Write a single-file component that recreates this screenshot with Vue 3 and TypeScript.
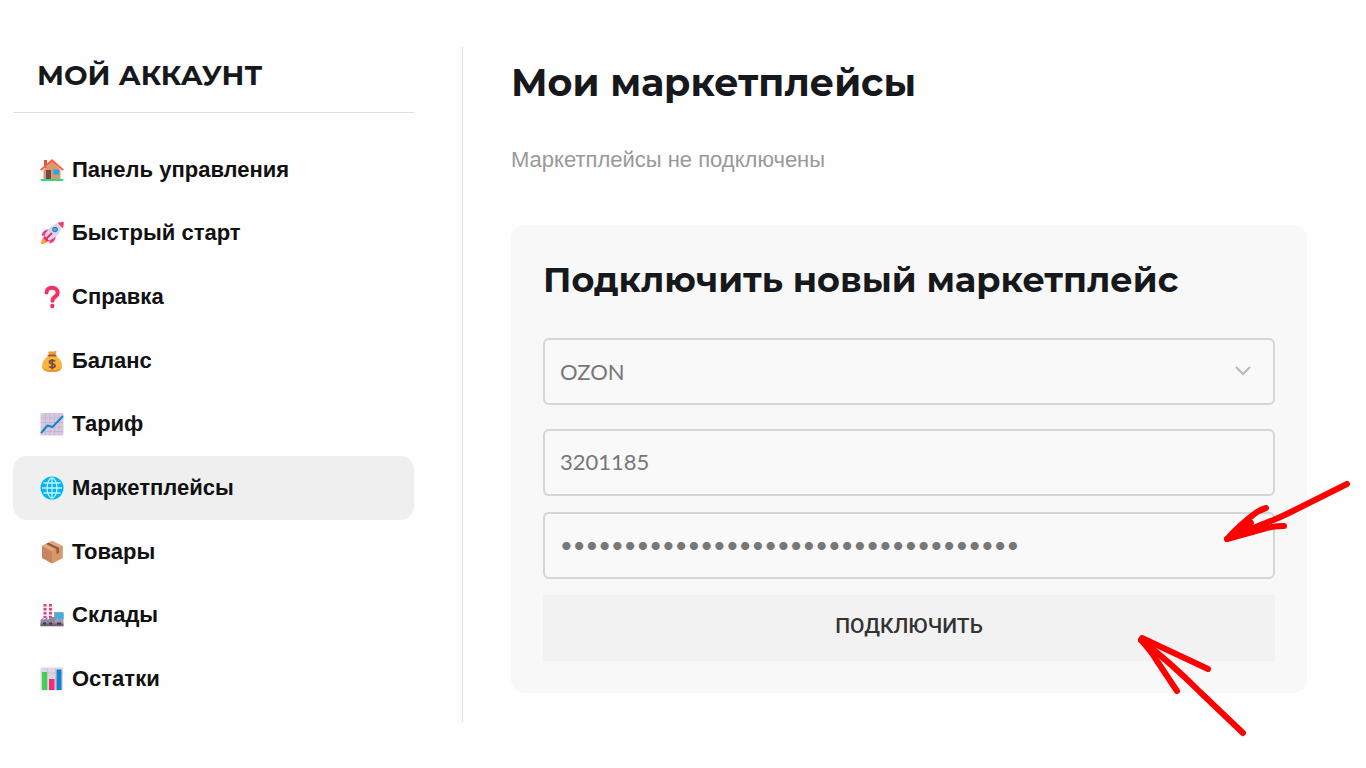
<script setup lang="ts">
import { ref } from 'vue'

interface MenuItem {
  icon: string
  label: string
}

const menu: MenuItem[] = [
  { icon: 'home', label: 'Панель управления' },
  { icon: 'rocket', label: 'Быстрый старт' },
  { icon: 'question', label: 'Справка' },
  { icon: 'money', label: 'Баланс' },
  { icon: 'chart', label: 'Тариф' },
  { icon: 'globe', label: 'Маркетплейсы' },
  { icon: 'box', label: 'Товары' },
  { icon: 'factory', label: 'Склады' },
  { icon: 'bars', label: 'Остатки' },
]

const active = ref('Маркетплейсы')
const marketplace = ref('OZON')
const clientId = ref('3201185')
const apiKey = ref('0'.repeat(36))
</script>

<template>
  <div class="page">
    <aside class="sidebar">
      <h2 class="account">МОЙ АККАУНТ</h2>
      <nav class="nav">
        <a
          v-for="item in menu"
          :key="item.label"
          href="#"
          class="link"
          :class="{ active: item.label === active }"
          @click.prevent="active = item.label"
        >
          <svg class="icon" viewBox="0 0 24 24" aria-hidden="true">
            <g v-if="item.icon === 'home'">
              <rect x="4" y="2" width="3" height="8" fill="#d9573f" />
              <path d="M3.500 12 12 4l8.500 8v9.500h-17z" fill="#d99a70" />
              <path d="M12 1 24 11.500l-1.500 1.200L12 4.500 1.500 12.700 0 11.500z" fill="#fb6549" />
              <rect x="6" y="12" width="5" height="9.500" fill="#73474a" />
              <rect x="13.500" y="11.500" width="5.500" height="5" fill="#1cabe9" />
              <rect x="0.500" y="21" width="23" height="2" rx="1" fill="#28dc83" />
            </g>
            <g v-else-if="item.icon === 'rocket'">
              <path d="M1 23c0-4 1.500-7 4.500-7L8 18.500C8 21.500 5 23 1 23z" fill="#ff9f3f" />
              <path d="M9 8.500c-4-.5-6.500 2-7.500 6l6 .5zM15.500 15c.5 4-2 6.500-6 7.500l-.5-6z" fill="#f4388a" />
              <path d="M4.500 14.500C8 7 14 1.500 22.500 1.500c0 8.500-5.500 14.500-13 18z" fill="#dcd4e6" />
              <path d="M17.500 1.800c2-.7 4-.8 6.200-.8.100 2.200-.1 4.200-.8 6.200z" fill="#f53a68" />
              <circle cx="15" cy="8.500" r="2.800" fill="#3b79b8" />
              <circle cx="15" cy="8.500" r="1.600" fill="#39b8f2" />
              <path d="m4 14.500 5.500 5.500-3 .5L3.500 17z" fill="#e8256b" />
              <path d="m7 17 4.500-4.500" stroke="#e8256b" stroke-width="1.800" stroke-linecap="round" />
            </g>
            <g v-else-if="item.icon === 'question'">
              <path d="M6.500 7.500C6.500 4.200 9 2.800 12 2.800s5.700 1.700 5.700 5c0 4-5.200 3.700-5.200 8" fill="none" stroke="#f92f60" stroke-width="4" stroke-linecap="round" />
              <circle cx="12.300" cy="21" r="2.200" fill="#f92f60" />
            </g>
            <g v-else-if="item.icon === 'money'">
              <path d="M8 2.500c1.500 1 2.500-.8 4 0s2.500-1.200 4.500 0L15 7H9.500z" fill="#f59b2d" />
              <path d="M9.500 6h5.500c5 3.500 7 7 7 11s-3 6-9.700 6S2 21 2 17s2.500-7.500 7.500-11z" fill="#f9b43d" />
              <path d="M3 19c5 3 12 3 18 0-1 3-4 4-8.700 4S4 22 3 19z" fill="#ef9332" />
              <path d="M8.500 6.500h7" stroke="#a05d38" stroke-width="2" stroke-linecap="round" />
              <path d="M15 12.500c-1-1.500-5.500-1.500-5.500.7s5.500 1.200 5.500 3.600-4.700 2.400-5.800.5M12.200 10v10.500" fill="none" stroke="#7a4c45" stroke-width="1.800" />
            </g>
            <g v-else-if="item.icon === 'chart'">
              <rect x="0.500" y="1" width="23" height="22.500" rx="1.500" fill="#d7c9df" />
              <path d="M5.500 1v22M10 1v22M14.500 1v22M19 1v22M1 6h22M1 10.500h22M1 15h22M1 19.500h22" stroke="#c4b2d1" stroke-width="0.800" />
              <path d="m1.500 20.500 6-7 5 1.500L22.500 4.500" fill="none" stroke="#1285cc" stroke-width="2" stroke-linecap="round" stroke-linejoin="round" />
            </g>
            <g v-else-if="item.icon === 'globe'">
              <circle cx="12" cy="12" r="11.500" fill="#00b5f1" />
              <g fill="none" stroke="#c5f1ff" stroke-width="1.300">
                <ellipse cx="12" cy="12" rx="5" ry="10" />
                <path d="M12 2v20M2 12h20M3.500 7h17M3.500 17h17" />
              </g>
            </g>
            <g v-else-if="item.icon === 'box'">
              <path d="M12 1 22.500 6v12L12 23.500 2 18V6z" fill="#c78462" />
              <path d="M12 1 22.500 6 12 11.500 2 6z" fill="#e6a67a" />
              <path d="M12 11.500 22.500 6v12L12 23.500z" fill="#d89767" />
              <path d="m6 4 10.500 5.200v5l2.500-1.400V7.700L8.500 2.700z" fill="#8f5945" />
            </g>
            <g v-else-if="item.icon === 'factory'">
              <path d="M5 1v14M10.500 1v14" stroke="#eee4ec" stroke-width="3" />
              <path d="M5 1v14M10.500 1v14" stroke="#ec3c7c" stroke-width="3" stroke-dasharray="2.500 1.500" />
              <rect x="14" y="9" width="9.500" height="13" fill="#a696b0" />
              <rect x="15.500" y="10" width="8" height="6" fill="#26bbe9" />
              <path d="M15.500 13h8" stroke="#7894bb" />
              <path d="m.5 17 3-2.500V17l4-3v3l3.500-3h4v9H.5z" fill="#94859f" />
              <path d="M.5 20.500h23v2.800H.5z" fill="#706078" />
              <path d="M3 20.500h3M9 20.500h3M17 20.500h4" stroke="#3e3549" stroke-width="2" />
            </g>
            <g v-else>
              <rect x="0.500" y="0.500" width="22.500" height="23" rx="1.500" fill="#dfd5e5" />
              <path d="M7.500 1v22M15.500 1v22M1 6h22" stroke="#c9bad3" stroke-width="0.800" />
              <rect x="2" y="5" width="5" height="18" fill="#3dd34f" />
              <rect x="9" y="12" width="5.500" height="11" fill="#f52d73" />
              <rect x="16.500" y="2.500" width="5" height="20.500" fill="#1482cc" />
            </g>
          </svg>
          <span>{{ item.label }}</span>
        </a>
      </nav>
    </aside>

    <main class="content">
      <h1 class="title">Мои маркетплейсы</h1>
      <p class="empty">Маркетплейсы не подключены</p>

      <form class="card" @submit.prevent>
        <h2 class="card-title">Подключить новый маркетплейс</h2>
        <div class="select-wrap">
          <select v-model="marketplace" class="field" aria-label="Маркетплейс">
            <option>OZON</option>
          </select>
          <svg class="chevron" viewBox="0 0 16 10" aria-hidden="true">
            <path d="m1 1 7 7 7-7" fill="none" stroke="#b8b8b8" stroke-width="2" />
          </svg>
        </div>
        <input v-model="clientId" class="field" type="text" aria-label="Client ID" />
        <input v-model="apiKey" class="field" type="password" autocomplete="off" aria-label="API ключ" />
        <button class="submit" type="submit">ПОДКЛЮЧИТЬ</button>

        <svg class="arrow arrow-key" viewBox="0 0 132 64" aria-hidden="true">
          <path d="M126 5 72 32Q56 40 42 45L6 60Q20 45 32 36Q38 31 45 29" />
          <path d="M6 60 42 50Q52 47 63 47M10 58 30 44 22 54 42 47" />
        </svg>
        <svg class="arrow arrow-submit" viewBox="0 0 112 106" aria-hidden="true">
          <path d="M106 100 63 59Q33 29 4 7" />
          <path d="M71 36 5 5 4 7Q14 18 20 28L40 58" />
        </svg>
      </form>
    </main>
  </div>
</template>

<style>
body {
  margin: 0;
  background: #fefefe;
}
</style>

<style scoped>
* {
  box-sizing: border-box;
}

.page {
  display: grid;
  grid-template-columns: 450px minmax(0, 1fr);
  padding: 47px 59px 46px 13px;
  color: #16181b;
  font-family: "Liberation Sans", Arial, sans-serif;
}

.sidebar {
  display: flex;
  flex-direction: column;
  padding: 0 48px 11px 0;
  border-right: 1px solid #dedede;
}

h1,
h2,
p {
  margin: 0;
}

.account,
.title,
.card-title {
  font-family: Montserrat, Inter, "Open Sans", sans-serif;
  font-weight: 700;
  white-space: nowrap;
}

.account {
  padding: 8px 24px 17px;
  border-bottom: 1px solid #dedede;
  font-size: 28px;
  line-height: 40px;
}

.nav {
  display: grid;
  flex: 1;
  grid-auto-rows: 1fr;
  margin-top: 25px;
}

.link {
  display: flex;
  align-items: center;
  gap: 8px;
  padding: 0 27px;
  border-radius: 14px;
  color: #111;
  font-size: 22px;
  font-weight: 700;
  text-decoration: none;
}

.link.active {
  background: #efefef;
}

.icon {
  flex: none;
  width: 24px;
  height: 24px;
}

.content {
  padding: 12px 0 29px 48px;
}

.title {
  font-size: 38px;
  line-height: 48px;
}

.empty {
  margin: 37px 0 49px;
  color: #999;
  font-size: 22px;
  line-height: 32px;
}

.card {
  position: relative;
  display: flex;
  flex-direction: column;
  gap: 16px;
  padding: 32px;
  border-radius: 14px;
  background: #f8f8f8;
}

.card-title {
  margin-bottom: 19px;
  font-size: 35px;
  line-height: 46px;
}

.select-wrap {
  position: relative;
  margin-bottom: 8px;
}

.field {
  display: block;
  width: 100%;
  height: 67px;
  padding: 0 15px 2px;
  border: 2px solid #d5d5d5;
  border-radius: 6px;
  outline: none;
  appearance: none;
  background: #f9f9f9;
  color: #777;
  font-family: Lato, sans-serif;
  font-size: 22px;
}

select.field {
  padding-bottom: 0;
}

.chevron {
  position: absolute;
  top: 28px;
  right: 24px;
  width: 16px;
  height: 10px;
  pointer-events: none;
}

.submit {
  height: 66px;
  padding: 0 0 4px;
  border: 0;
  background: #f2f2f2;
  color: #333;
  font-family: Roboto, sans-serif;
  font-size: 21px;
  font-weight: 500;
}

.arrow {
  position: absolute;
  fill: none;
  stroke: #fe0000;
  stroke-width: 6;
  stroke-linecap: round;
  stroke-linejoin: round;
  pointer-events: none;
}

.arrow-key {
  top: 254px;
  right: -46px;
  width: 132px;
  height: 64px;
}

.arrow-submit {
  right: 58px;
  bottom: -46px;
  width: 112px;
  height: 106px;
}
</style>
